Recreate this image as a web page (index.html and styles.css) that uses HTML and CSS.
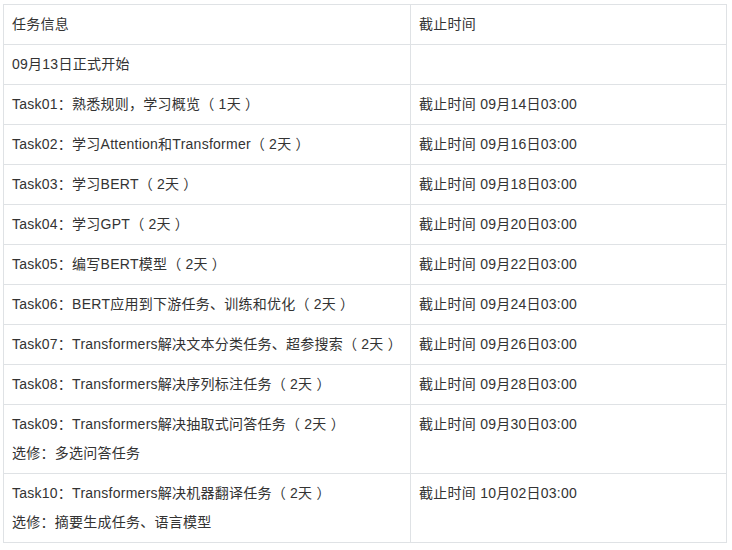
FILE: index.html
```html
<!DOCTYPE html>
<html lang="zh">
<head>
<meta charset="utf-8">
<link rel="stylesheet" href="styles.css">
</head>
<body>
<table class="tasks">
  <colgroup><col class="c1"><col class="c2"></colgroup>
  <tr><td>任务信息</td><td>截止时间</td></tr>
  <tr><td>09月13日正式开始</td><td></td></tr>
  <tr><td>Task01：熟悉规则，学习概览（<span class="pin">1天</span>）</td><td>截止时间 09月14日03:00</td></tr>
  <tr><td>Task02：学习Attention和Transformer（<span class="pin">2天</span>）</td><td>截止时间 09月16日03:00</td></tr>
  <tr><td>Task03：学习BERT（<span class="pin">2天</span>）</td><td>截止时间 09月18日03:00</td></tr>
  <tr><td>Task04：学习GPT（<span class="pin">2天</span>）</td><td>截止时间 09月20日03:00</td></tr>
  <tr><td>Task05：编写BERT模型（<span class="pin">2天</span>）</td><td>截止时间 09月22日03:00</td></tr>
  <tr><td>Task06：BERT应用到下游任务、训练和优化（<span class="pin">2天</span>）</td><td>截止时间 09月24日03:00</td></tr>
  <tr><td>Task07：Transformers解决文本分类任务、超参搜索（<span class="pin">2天</span>）</td><td>截止时间 09月26日03:00</td></tr>
  <tr><td>Task08：Transformers解决序列标注任务（<span class="pin">2天</span>）</td><td>截止时间 09月28日03:00</td></tr>
  <tr><td><p>Task09：Transformers解决抽取式问答任务（<span class="pin">2天</span>）</p><p>选修：多选问答任务</p></td><td>截止时间 09月30日03:00</td></tr>
  <tr><td><p>Task10：Transformers解决机器翻译任务（<span class="pin">2天</span>）</p><p>选修：摘要生成任务、语言模型</p></td><td>截止时间 10月02日03:00</td></tr>
</table>
</body>
</html>
```
FILE: styles.css
```css
html, body {
  margin: 0;
  padding: 0;
  background: #ffffff;
}
body {
  padding: 4px 0 0 3px;
  font-family: "Liberation Sans", Arial, "Noto Sans CJK TC", sans-serif;
  font-size: 14px;
  color: #333333;
}
.tasks {
  border-collapse: collapse;
  width: 723px;
  table-layout: fixed;
}
.c1 { width: 407px; }
.c2 { width: 316px; }
.tasks td {
  border: 1px solid #dfe2e5;
  padding: 8px 8px;
  line-height: 23px;
  height: 23px;
  vertical-align: top;
  white-space: nowrap;
  letter-spacing: 0.25px;
}
.tasks td p {
  margin: 0;
}
.tasks td p + p {
  margin-top: 6px;
}
.pin {
  margin: 0 4px;
}
```
